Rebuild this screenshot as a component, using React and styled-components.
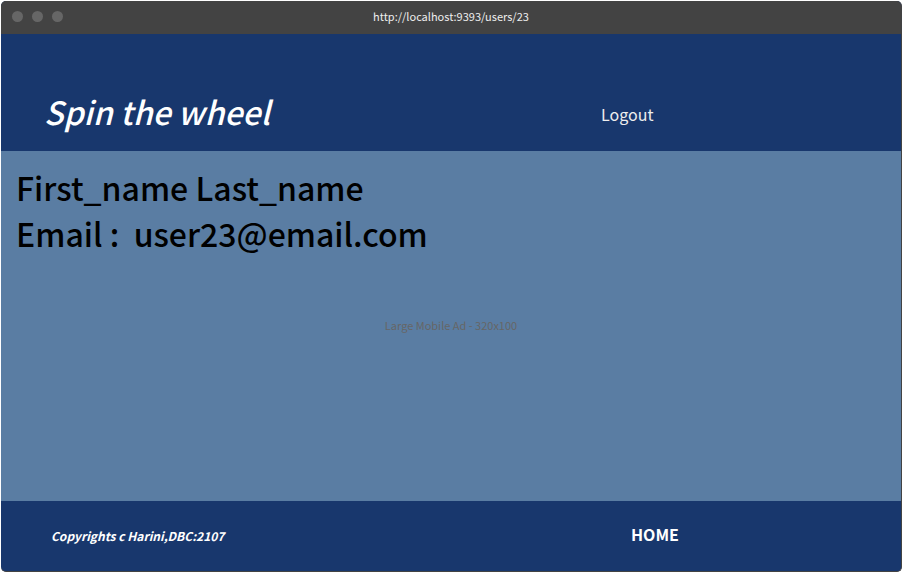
import React from 'react';
import styled, { createGlobalStyle } from 'styled-components';

const GlobalStyle = createGlobalStyle`
  *, *::before, *::after { box-sizing: border-box; }
  body {
    margin: 0;
    background: #fff;
    font-family: "Noto Sans CJK SC", "Noto Sans", sans-serif;
  }
`;

const Browser = styled.div`
  display: flex;
  flex-direction: column;
  min-height: calc(100vh - 5px);
  margin: 1px 1px 4px;
  border-radius: 5px;
  border-right: 1px solid #434343;
  border-bottom: 1px solid #434343;
  overflow: hidden;
  background: #18376d;
`;

const TitleBar = styled.header`
  display: grid;
  grid-template-columns: 1fr auto 1fr;
  align-items: center;
  height: 33px;
  padding: 0 11px 3px;
  background: #434343;
`;

const WindowDots = styled.div`
  display: flex;
  gap: 9px;
`;

const Dot = styled.span`
  width: 11px;
  height: 11px;
  border-radius: 50%;
  background: #666;
`;

const Address = styled.span`
  font-size: 11px;
  line-height: 18px;
  color: #eee;
`;

const Banner = styled.div`
  display: grid;
  grid-template-columns: 65% 1fr;
  align-items: end;
  height: 117px;
  padding: 0 0 13px 43px;
`;

const Title = styled.h1`
  margin: 0;
  font-size: 32px;
  line-height: 54px;
  font-weight: 500;
  font-style: italic;
  color: #fff;
`;

const NavLink = styled.a`
  font-size: 16px;
  line-height: 48px;
  font-weight: 400;
  color: #eee;
  text-decoration: none;
`;

const Main = styled.main`
  display: flex;
  flex: 1;
  flex-direction: column;
  padding: 13px 15px;
  background: #5a7da3;
`;

const Profile = styled.h2`
  margin: 0;
  font-size: 32px;
  line-height: 46px;
  font-weight: 500;
  color: #000;
`;

const Line = styled.span`
  display: block;
  white-space: pre-wrap;
`;

const AdSlot = styled.aside`
  margin-top: 60px;
  text-align: center;
  font-size: 11px;
  line-height: 18px;
  color: #666;
`;

const Footer = styled.footer`
  display: grid;
  grid-template-columns: 68% 1fr;
  column-gap: 2px;
  align-items: baseline;
  height: 70px;
  padding: 20px 0 0 50px;
`;

const Copyright = styled.small`
  font-size: 12px;
  line-height: 20px;
  font-weight: 700;
  font-style: italic;
  color: #fff;
`;

const HomeLink = styled(NavLink)`
  line-height: 26px;
  font-weight: 700;
  color: #fff;
`;

export default function App() {
  return (
    <>
      <GlobalStyle />
      <Browser>
        <TitleBar>
          <WindowDots><Dot /><Dot /><Dot /></WindowDots>
          <Address>http://localhost:9393/users/23</Address>
        </TitleBar>
        <Banner>
          <Title>Spin the wheel</Title>
          <NavLink href="#logout">Logout</NavLink>
        </Banner>
        <Main>
          <Profile>
            <Line>First_name Last_name</Line>
            <Line>{'Email :  user23@email.com'}</Line>
          </Profile>
          <AdSlot>Large Mobile Ad - 320x100</AdSlot>
        </Main>
        <Footer>
          <Copyright>Copyrights c Harini,DBC:2107</Copyright>
          <HomeLink href="#home">HOME</HomeLink>
        </Footer>
      </Browser>
    </>
  );
}
